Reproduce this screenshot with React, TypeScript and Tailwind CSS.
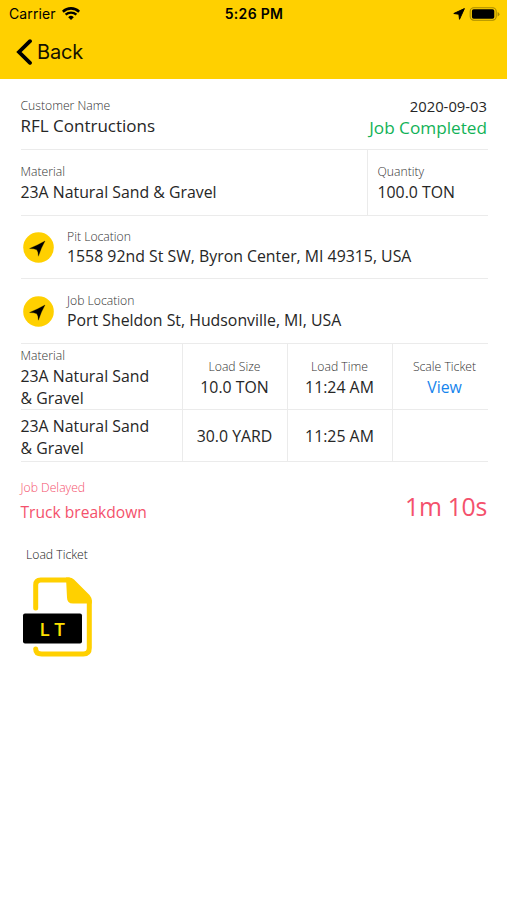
import React from 'react';

const LABEL = "text-[12.200px] leading-5 font-light text-[#333]";
const VALUE = "text-[15.850px] leading-5 text-[#262626]";

const StatusBar: React.FC = () => (
  <div className="h-[27px] px-[9px] grid grid-cols-3 items-center font-[Inter,sans-serif] text-black">
    <div className="flex items-center gap-[6px]">
      <span className="text-[14px] leading-5 tracking-[0.1px]">Carrier</span>
      <svg width="18" height="13" viewBox="0 0 18 13" fill="none" stroke="black">
        <path d="M0.8 4.7a11.8 11.8 0 0 1 16.4 0" strokeWidth="2.6" />
        <path d="M3.6 7.7a7.8 7.8 0 0 1 10.8 0" strokeWidth="2.3" />
        <path d="M9 13l-2.8-2.8a4 4 0 0 1 5.6 0z" fill="black" stroke="none" />
      </svg>
    </div>
    <span className="pl-[1px] text-center text-[14px] leading-5 font-semibold tracking-[0.3px]">5:26 PM</span>
    <div className="flex items-center justify-end gap-[4px] -mr-[3px]">
      <svg width="12" height="12" viewBox="0 0 12 12">
        <path d="M11.4 0.6L0.8 5.500L5.900 6.200L6.500 11.300z" fill="black" stroke="black" strokeWidth="1" strokeLinejoin="round" />
      </svg>
      <svg width="32" height="14" viewBox="0 0 32 14">
        <rect x="1.200" y="0.800" width="26" height="12.400" rx="3.600" fill="none" stroke="#a88a00" strokeWidth="1.100" />
        <rect x="2.900" y="2.200" width="22.400" height="9.600" rx="1.800" fill="black" />
        <path d="M28.600 5v4.400q1.900-.7 1.900-2.200T28.600 5z" fill="#a88a00" />
      </svg>
    </div>
  </div>
);

const LocationRow: React.FC<{ label: string; address: string }> = ({ label, address }) => (
  <div className="flex items-center gap-[13px] pl-[2.500px] w-full">
    <svg width="31" height="31" viewBox="0 0 31 31">
      <circle cx="15.500" cy="15.500" r="15.300" fill="#ffd000" />
      <path d="M22 9Q18 16 15.400 24.200Q15.500 20 13.800 17.800Q11 16.400 6.600 16.500Q15 13 22 9z" fill="black" stroke="black" strokeWidth="0.300" />
    </svg>
    <div className="pb-[1px]">
      <p className="text-[12.200px] leading-[19px] font-light text-[#333]">{label}</p>
      <p className={VALUE}>{address}</p>
    </div>
  </div>
);

const TicketIcon: React.FC = () => (
  <svg width="72" height="83" viewBox="0 0 72 83">
    <path d="M13.700 33V10q0-5 5-5H47L67.300 26V73q0 6-6 6H19.700q-6 0-6-5" fill="none" stroke="#ffd000" strokeWidth="5" strokeLinecap="round" strokeLinejoin="round" />
    <path d="M44 2.500h3q3 0 5 2L67.500 20q2.300 2.500 2.300 6v2.500H51q-6 0-6-6z" fill="#ffd000" />
    <rect x="1" y="38.500" width="59" height="30" rx="2" fill="black" />
    <text x="17.500 32.200" y="60.500" fontFamily="Open Sans" fontSize="18.800" fontWeight="600" fill="#ffe000">LT</text>
  </svg>
);

const App: React.FC = () => {
  const loads = [
    { size: "10.0 TON", time: "11:24 AM", ticket: "View" },
    { size: "30.0 YARD", time: "11:25 AM", ticket: "" }
  ];

  return (
    <div className="w-[507px] h-[900px] bg-white overflow-hidden font-['Open_Sans',sans-serif]">
      <header className="h-[79px] bg-[#ffd000]">
        <StatusBar />
        <div className="flex items-center gap-[4px] pl-[16px] h-[50px]">
          <svg width="17" height="26" viewBox="0 0 17 26" fill="none">
            <path d="M14 2.200L3 13l11 10.800" stroke="black" strokeWidth="3.800" strokeLinecap="round" />
          </svg>
          <span className="font-[Inter,sans-serif] text-[20px] leading-6 tracking-[-0.200px] text-[#151200]">Back</span>
        </div>
      </header>

      <main className="pl-[20.500px] pr-[19px]">
        <section className="h-[71px] pt-[17px] flex justify-between border-b border-[#ebebeb]">
          <div>
            <p className={LABEL}>Customer Name</p>
            <p className="text-[17px] leading-5 text-[#262626]">RFL Contructions</p>
          </div>
          <div className="text-right pr-[1px]">
            <p className="text-[14.800px] leading-[20px] text-[#262626]">2020-09-03</p>
            <p className="text-[17.200px] leading-[24px] text-[#12b257]">Job Completed</p>
          </div>
        </section>

        <section className="h-[66px] flex border-b border-[#ebebeb]">
          <div className="flex-1 pt-[12px]">
            <p className={LABEL}>Material</p>
            <p className={VALUE}>23A Natural Sand &amp; Gravel</p>
          </div>
          <div className="w-[121.500px] pt-[12px] pl-[10px] border-l border-[#ebebeb]">
            <p className={LABEL}>Quantity</p>
            <p className={VALUE}>100.0 TON</p>
          </div>
        </section>

        <section className="h-[63px] flex border-b border-[#ebebeb]">
          <LocationRow label="Pit Location" address="1558 92nd St SW, Byron Center, MI 49315, USA" />
        </section>
        <section className="h-[65px] flex border-b border-[#ebebeb]">
          <LocationRow label="Job Location" address="Port Sheldon St, Hudsonville, MI, USA" />
        </section>

        {loads.map((load, index) => (
          <section
            key={index}
            className={`grid grid-cols-[161.5px_105px_105px_96px] border-b border-[#ebebeb] ${index === 0 ? "h-[66px]" : "h-[52px]"}`}
          >
            <div className={index === 0 ? "pt-[2px]" : "pt-[6px]"}>
              {index === 0 && <p className={LABEL}>Material</p>}
              <p className="text-[15.850px] leading-[21.500px] text-[#262626]">23A Natural Sand<br />&amp; Gravel</p>
            </div>
            <div className="flex flex-col justify-center text-center pr-[1px] border-l border-[#ebebeb]">
              {index === 0 && <p className={LABEL}>Load Size</p>}
              <p className={VALUE}>{load.size}</p>
            </div>
            <div className="flex flex-col justify-center text-center pr-[1px] border-l border-[#ebebeb]">
              {index === 0 && <p className={LABEL}>Load Time</p>}
              <p className={VALUE}>{load.time}</p>
            </div>
            <div className="flex flex-col justify-center text-center pl-[8px] border-l border-[#ebebeb]">
              {index === 0 && <p className={LABEL}>Scale Ticket</p>}
              <p className="text-[15.850px] leading-5 text-[#1684ed]">{load.ticket}</p>
            </div>
          </section>
        ))}

        <section className="h-[82px] pt-[16px] flex justify-between text-[#f4516c]">
          <div>
            <p className="text-[12.200px] leading-5 font-light">Job Delayed</p>
            <p className="text-[15.600px] leading-7">Truck breakdown</p>
          </div>
          <p className="pt-[12px] pr-[1px] text-[24.800px] leading-8 tracking-[-0.300px]">1m 10s</p>
        </section>

        <section>
          <p className="pl-[5.500px] pt-[1px] text-[12.200px] leading-5 font-light text-[#222]">Load Ticket</p>
          <div className="pt-[10px] pl-[1px]">
            <TicketIcon />
          </div>
        </section>
      </main>
    </div>
  );
};

export default App;
